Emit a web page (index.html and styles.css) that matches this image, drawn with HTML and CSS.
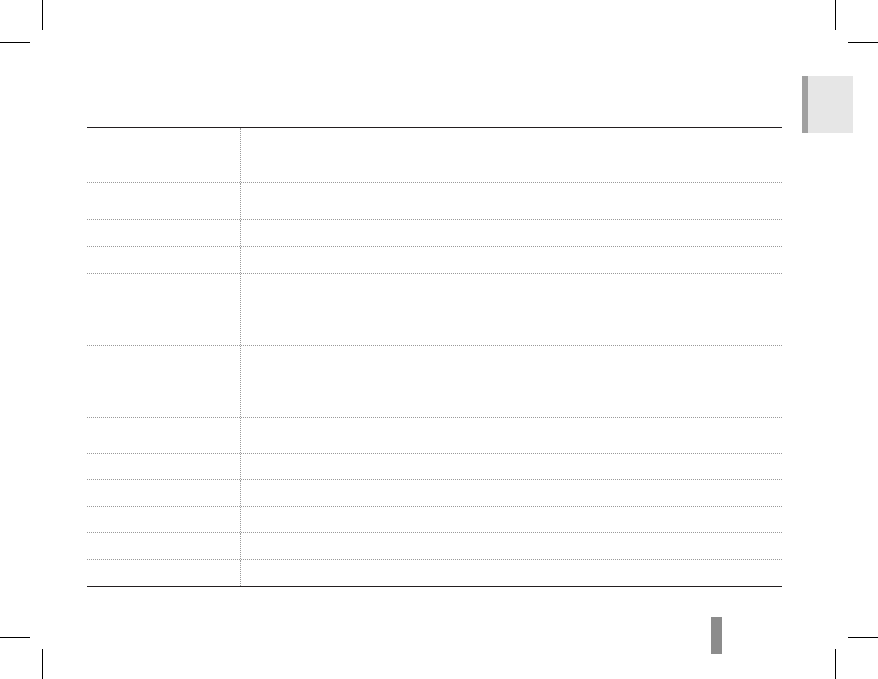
FILE: index.html
```html
<!DOCTYPE html>
<html>
<head>
<meta charset="utf-8">
<link rel="stylesheet" href="styles.css">
</head>
<body>
<div class="page">
  <span class="mark mark-v tl-v"></span>
  <span class="mark mark-h tl-h"></span>
  <span class="mark mark-v tr-v"></span>
  <span class="mark mark-h tr-h"></span>
  <span class="mark mark-v bl-v"></span>
  <span class="mark mark-h bl-h"></span>
  <span class="mark mark-v br-v"></span>
  <span class="mark mark-h br-h"></span>

  <div class="tab"></div>
  <div class="pagebar"></div>

  <div class="table">
    <div class="row h55"><div class="c1"></div><div class="c2"></div></div>
    <div class="row h37"><div class="c1"></div><div class="c2"></div></div>
    <div class="row h27"><div class="c1"></div><div class="c2"></div></div>
    <div class="row h27"><div class="c1"></div><div class="c2"></div></div>
    <div class="row h72"><div class="c1"></div><div class="c2"></div></div>
    <div class="row h72"><div class="c1"></div><div class="c2"></div></div>
    <div class="row h36"><div class="c1"></div><div class="c2"></div></div>
    <div class="row h26"><div class="c1"></div><div class="c2"></div></div>
    <div class="row h27"><div class="c1"></div><div class="c2"></div></div>
    <div class="row h26"><div class="c1"></div><div class="c2"></div></div>
    <div class="row h27"><div class="c1"></div><div class="c2"></div></div>
    <div class="row last"><div class="c1"></div><div class="c2"></div></div>
  </div>
</div>
</body>
</html>
```
FILE: styles.css
```css
html, body {
  margin: 0;
  padding: 0;
  background: #fff;
  font-family: "Liberation Sans", Arial, sans-serif;
}
.page {
  position: relative;
  width: 878px;
  height: 679px;
  overflow: hidden;
  padding-top: 127px;
  box-sizing: border-box;
}
.mark {
  position: absolute;
  background: #000;
}
.mark-v { width: 1px; height: 30px; }
.mark-h { height: 1px; width: 30px; }
.tl-v { left: 42px; top: 0; }
.tl-h { left: 0; top: 42px; }
.tr-v { left: 835px; top: 0; }
.tr-h { left: 848px; top: 42px; }
.bl-v { left: 42px; top: 649px; }
.bl-h { left: 0; top: 637px; }
.br-v { left: 835px; top: 649px; }
.br-h { left: 848px; top: 637px; }

.tab {
  position: absolute;
  left: 802px;
  top: 76px;
  width: 45px;
  height: 57px;
  background: #e6e6e6;
  border-left: 6px solid #a0a0a0;
}
.pagebar {
  position: absolute;
  left: 711px;
  top: 617px;
  width: 11px;
  height: 37px;
  background: #8c8c8c;
}

.table {
  margin-left: 87px;
  width: 695px;
  border-top: 1px solid #231f20;
  border-bottom: 1px solid #231f20;
  display: flex;
  flex-direction: column;
}
.row {
  display: grid;
  grid-template-columns: 153px 1fr;
  border-bottom: 1px dotted #9a9a9a;
  box-sizing: border-box;
}
.row.last { border-bottom: none; height: 26px; }
.c2 { border-left: 1px dotted #9a9a9a; }
.h55 { height: 55px; }
.h37 { height: 37px; }
.h36 { height: 36px; }
.h27 { height: 27px; }
.h26 { height: 26px; }
.h72 { height: 72px; }
```
